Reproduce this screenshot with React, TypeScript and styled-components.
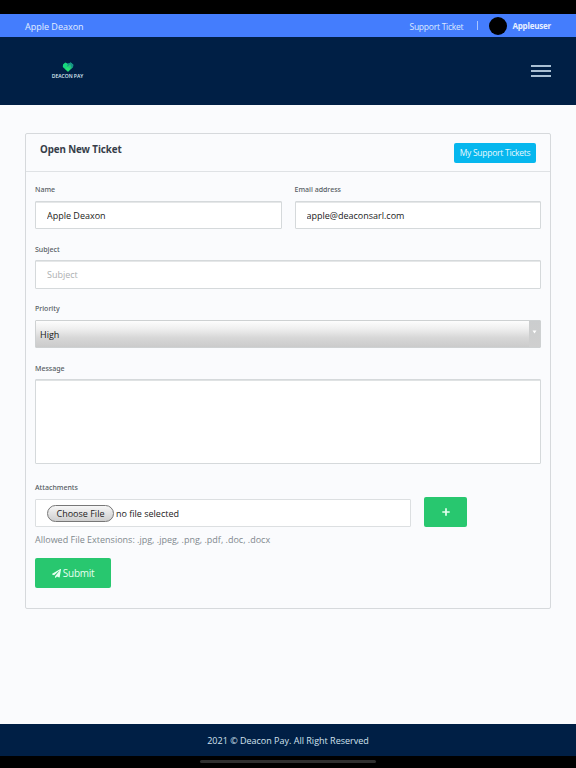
import React from "react";
import styled, { createGlobalStyle } from "styled-components";
import { FaPaperPlane } from "react-icons/fa";

const Global = createGlobalStyle`
  * { box-sizing: border-box; }
  body { margin: 0; background: #fafbfd; font-family: "Open Sans", "Noto Sans", sans-serif; }
  input, textarea, button { font-family: inherit; margin: 0; }
`;

const Page = styled.div`
  display: flex;
  flex-direction: column;
  height: 768px;
  overflow: hidden;
`;

const StatusArea = styled.div`
  flex: 0 0 14px;
  background: #000;
`;

const TopBar = styled.div`
  flex: 0 0 23px;
  display: flex;
  align-items: center;
  justify-content: space-between;
  padding: 0 25px;
  background: #447dfd;
  color: #dce9ff;
  font-size: 9px;
`;

const SiteUser = styled.span`
  padding-top: 1px;
  color: #e2edff;
`;

const TopLinks = styled.div`
  display: flex;
  align-items: center;
`;

const SupportLink = styled.a`
  font-size: 8.5px;
  letter-spacing: -0.24px;
  line-height: 12px;
  padding-top: 2px;
`;

const Divider = styled.span`
  width: 1px;
  height: 9px;
  margin: 0 11px 0 14px;
  background: #a9c5ff;
`;

const Avatar = styled.span`
  width: 18px;
  height: 18px;
  border-radius: 50%;
  background: #000;
`;

const UserName = styled.strong`
  margin-left: 5px;
  font-size: 8px;
  font-weight: 700;
  letter-spacing: -0.2px;
  line-height: 12px;
  color: #e8f0ff;
`;

const Header = styled.header`
  flex: 0 0 68px;
  display: flex;
  align-items: center;
  justify-content: space-between;
  padding: 0 25px 0 51px;
  background: #001f45;
`;

const Logo = styled.div`
  display: flex;
  flex-direction: column;
  align-items: center;
  width: 33px;
  color: #dcebf5;
  font-size: 5px;
  font-weight: 600;
  line-height: 7px;
  white-space: nowrap;
  svg { display: block; margin-bottom: 1px; }
`;

const MenuButton = styled.button`
  display: flex;
  flex-direction: column;
  gap: 3px;
  width: 20px;
  padding: 0;
  border: 0;
  background: none;
`;

const MenuLine = styled.span`
  height: 2px;
  background: #a9bfd3;
`;

const Main = styled.main`
  flex: 1;
  padding: 28px 25px 0;
`;

const Card = styled.section`
  height: 476px;
  border: 1px solid #d6d9dc;
  border-radius: 2px;
`;

const CardHeader = styled.div`
  display: flex;
  justify-content: space-between;
  height: 38px;
  padding: 9px 14px 0;
  border-bottom: 1px solid #dfe2e5;
`;

const Title = styled.h1`
  margin: 0;
  font-family: "Noto Sans", sans-serif;
  font-size: 9.8px;
  letter-spacing: -0.1px;
  line-height: 14px;
  font-weight: 700;
  color: #363e49;
`;

const TicketsLink = styled.a`
  display: flex;
  align-items: center;
  justify-content: center;
  width: 82px;
  height: 20px;
  border-radius: 2px;
  background: #06b7ee;
  color: #e6f9ff;
  font-size: 8.5px;
  letter-spacing: -0.26px;
  padding-bottom: 1px;
`;

const Form = styled.form`
  padding: 0 9px;
`;

const FieldRow = styled.div`
  display: grid;
  grid-template-columns: 1fr 1fr;
  gap: 13px;
`;

const Field = styled.div<{ $height: number }>`
  display: flex;
  flex-direction: column;
  height: ${(p) => p.$height}px;
`;

const Label = styled.label<{ $top?: number }>`
  height: 29px;
  padding-top: ${(p) => p.$top ?? 12}px;
  font-family: "Noto Sans", sans-serif;
  font-size: 7px;
  line-height: 12px;
  font-weight: 500;
  color: #555b62;
`;

const TextInput = styled.input<{ $height?: number }>`
  width: 100%;
  height: ${(p) => p.$height ?? 28}px;
  padding: 0 11px;
  border: 1px solid #d5d9db;
  border-radius: 1px;
  outline: 0;
  background: #fff;
  box-shadow: inset 0 1px 0 #e5e7e8;
  color: #222;
  font-size: 9px;
  &::placeholder { color: #adb0b2; opacity: 1; }
`;

const SelectBox = styled.div`
  display: flex;
  align-items: stretch;
  height: 28px;
  border: 1px solid #ced1d2;
  border-radius: 1px;
  background: linear-gradient(#fdfdfd 0%, #efefef 30%, #d7d7d7 65%, #cbcbcb 100%);
  color: #161616;
`;

const SelectValue = styled.span`
  flex: 1;
  padding-left: 4px;
  font-size: 9px;
  line-height: 27px;
`;

const SelectArrow = styled.span`
  width: 11px;
  padding: 9px 0 0 3px;
  background: linear-gradient(#cbcdce, #cfcfcf);
  svg { display: block; }
`;

const MessageInput = styled.textarea`
  width: 100%;
  height: 85px;
  padding: 8px 11px;
  resize: none;
  border: 1px solid #d5d9db;
  border-radius: 1px;
  outline: 0;
  background: #fff;
  box-shadow: inset 0 1px 0 #dfe2e3;
  font-size: 9px;
`;

const AttachmentRow = styled.div`
  display: flex;
  align-items: flex-end;
  gap: 13px;
  height: 28px;
`;

const FileBox = styled.div`
  display: flex;
  align-items: center;
  width: 376px;
  height: 28px;
  padding-left: 11px;
  border: 1px solid #dcdfe1;
  border-radius: 1px;
  background: #fff;
  color: #222;
  font-size: 9px;
`;

const ChooseButton = styled.button`
  width: 67px;
  height: 17px;
  margin-right: 2px;
  padding: 0;
  border: 1px solid #777;
  border-radius: 9px;
  background: linear-gradient(#f7f7f7, #e4e4e4 45%, #cecece);
  color: #222;
  font-size: 9px;
  line-height: 15px;
`;

const GreenButton = styled.button<{ $width: number }>`
  display: flex;
  align-items: center;
  justify-content: center;
  gap: 2px;
  flex-shrink: 0;
  width: ${(p) => p.$width}px;
  height: 30px;
  padding: 0;
  border: 0;
  border-radius: 2px;
  background: #28c76f;
  color: #e6fff0;
  font-size: 10px;
  letter-spacing: -0.3px;
`;

const Hint = styled.p`
  margin: 5px 0 12px;
  font-size: 9px;
  line-height: 13px;
  color: #81898e;
`;

const Footer = styled.footer`
  flex: 0 0 32px;
  height: 32px;
  overflow: hidden;
  background: #001f45;
  color: #d2e2ee;
  font-size: 9px;
  line-height: 34px;
  text-align: center;
`;

const HomeArea = styled.div`
  flex: 0 0 12px;
  display: flex;
  justify-content: center;
  padding-top: 4px;
  background: #000;
`;

const HomeBar = styled.span`
  width: 176px;
  height: 3px;
  border-radius: 2px;
  background: #303030;
`;

export default function App() {
  return (
    <Page>
      <Global />
      <StatusArea />
      <TopBar>
        <SiteUser>Apple Deaxon</SiteUser>
        <TopLinks>
          <SupportLink>Support Ticket</SupportLink>
          <Divider />
          <Avatar />
          <UserName>Appleuser</UserName>
        </TopLinks>
      </TopBar>
      <Header>
        <Logo>
          <svg width="12" height="10" viewBox="0 0 12 10">
            <path d="M3.2 0.5 6 1.8 8.8 0.5 11.3 2.8 11 5 6 9.7 0.8 5 1 2.5Z" fill="#15d77d" />
            <path d="M6 1.8 8.6 0.4 11.3 2.8 11 5 8.5 7.3 5 4.2Z" fill="#168f88" />
            <path d="M8.2 2 3 7 6 9.8 9.7 6Z" fill="#2ce46f" opacity="0.65" />
          </svg>
          DEACON PAY
        </Logo>
        <MenuButton aria-label="Menu">
          <MenuLine />
          <MenuLine />
          <MenuLine />
        </MenuButton>
      </Header>
      <Main>
        <Card>
          <CardHeader>
            <Title>Open New Ticket</Title>
            <TicketsLink>My Support Tickets</TicketsLink>
          </CardHeader>
          <Form onSubmit={(e) => e.preventDefault()}>
            <FieldRow>
              <Field $height={59}>
                <Label>Name</Label>
                <TextInput defaultValue="Apple Deaxon" />
              </Field>
              <Field $height={59}>
                <Label>Email address</Label>
                <TextInput defaultValue="apple@deaconsarl.com" />
              </Field>
            </FieldRow>
            <Field $height={60}>
              <Label $top={13}>Subject</Label>
              <TextInput placeholder="Subject" $height={29} />
            </Field>
            <Field $height={59}>
              <Label>Priority</Label>
              <SelectBox>
                <SelectValue>High</SelectValue>
                <SelectArrow>
                  <svg width="5" height="4" viewBox="0 0 5 4">
                    <path d="M0.5 0.5h4L2.5 3.5Z" fill="#fff" />
                  </svg>
                </SelectArrow>
              </SelectBox>
            </Field>
            <Field $height={120}>
              <Label $top={13}>Message</Label>
              <MessageInput />
            </Field>
            <Field $height={58}>
              <Label>Attachments</Label>
              <AttachmentRow>
                <FileBox>
                  <ChooseButton type="button">Choose File</ChooseButton>
                  no file selected
                </FileBox>
                <GreenButton type="button" $width={43} aria-label="Add attachment">
                  <svg width="8" height="8" viewBox="0 0 8 8">
                    <path d="M4 0.3V7.7M0.3 4H7.7" stroke="#e6fff0" strokeWidth="1.7" />
                  </svg>
                </GreenButton>
              </AttachmentRow>
            </Field>
            <Hint>Allowed File Extensions: .jpg, .jpeg, .png, .pdf, .doc, .docx</Hint>
            <GreenButton type="submit" $width={76}>
              <FaPaperPlane size={9} />
              Submit
            </GreenButton>
          </Form>
        </Card>
      </Main>
      <Footer>2021 © Deacon Pay. All Right Reserved</Footer>
      <HomeArea>
        <HomeBar />
      </HomeArea>
    </Page>
  );
}
